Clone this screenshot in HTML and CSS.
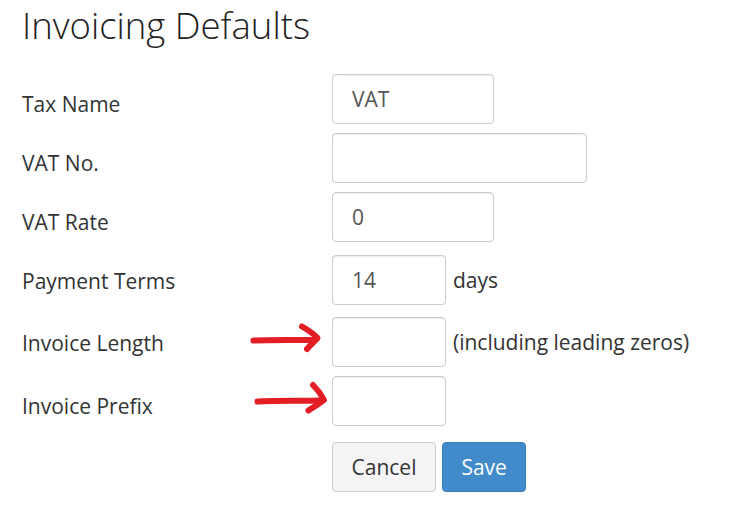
FILE: index.html
```html
<!DOCTYPE html>
<html>
<head>
<meta charset="utf-8">
<link rel="stylesheet" href="styles.css">
</head>
<body>
<div class="page">
  <h1 class="title">Invoicing Defaults</h1>
  <form class="form">
    <div class="row">
      <label class="label">Tax Name</label>
      <div class="control"><input class="input w-md" type="text" value="VAT"></div>
    </div>
    <div class="row">
      <label class="label">VAT No.</label>
      <div class="control"><input class="input w-lg" type="text" value=""></div>
    </div>
    <div class="row">
      <label class="label">VAT Rate</label>
      <div class="control"><input class="input w-md" type="text" value="0"></div>
    </div>
    <div class="row row-addon">
      <label class="label">Payment Terms</label>
      <div class="control"><input class="input w-sm" type="text" value="14"><span class="addon">days</span></div>
    </div>
    <div class="row row-addon">
      <label class="label">Invoice Length</label>
      <div class="control"><input class="input w-sm" type="text" value=""><span class="addon">(including leading zeros)</span></div>
      <svg class="arrow arrow-1" width="80" height="34" viewBox="0 0 80 34">
        <path d="M5.5 18.5 C 25 17.5, 45 18, 65 18" />
        <path d="M54 4.5 C 60 8, 66 12, 69.5 16 C 66 20, 62 23.5, 59 27" />
      </svg>
    </div>
    <div class="row">
      <label class="label">Invoice Prefix</label>
      <div class="control"><input class="input w-sm" type="text" value=""></div>
      <svg class="arrow arrow-2" width="80" height="36" viewBox="0 0 80 36">
        <path d="M7.5 21.5 C 28 20.5, 50 21, 70 20.5" />
        <path d="M63 5 C 67 9, 71 14, 74 20 C 69 24, 63 27.5, 58.5 30.5" />
      </svg>
    </div>
    <div class="actions">
      <button type="button" class="btn btn-default">Cancel</button>
      <button type="button" class="btn btn-primary">Save</button>
    </div>
  </form>
</div>
</body>
</html>
```

FILE: styles.css
```css
html, body {
  margin: 0;
  padding: 0;
  background: #ffffff;
}

.page {
  padding-left: 22px;
  font-family: "Open Sans", "Noto Sans", "Liberation Sans", sans-serif;
  color: #333333;
}

.title {
  margin: 0;
  font-size: 36.5px;
  font-weight: 300;
  line-height: 50px;
  color: #222222;
}

.form {
  margin-top: 24px;
  display: flex;
  flex-direction: column;
}

.row {
  position: relative;
  display: flex;
  align-items: flex-start;
  margin-bottom: 9px;
}

.label {
  width: 310px;
  flex: none;
  font-size: 21px;
  line-height: 30px;
  padding-top: 14.5px;
  color: #333333;
}

.control {
  display: flex;
  align-items: center;
}

.row-addon .control {
  padding-top: 3.5px;
}

.input {
  box-sizing: border-box;
  height: 50px;
  padding: 0 19px;
  border: 1px solid #cccccc;
  border-radius: 4px;
  box-shadow: inset 0 1px 1px rgba(0, 0, 0, 0.075);
  font-family: "Open Sans", "Noto Sans", "Liberation Sans", sans-serif;
  font-size: 21px;
  line-height: 30px;
  color: #555555;
  background: #ffffff;
  outline: none;
}

.w-sm { width: 114px; }
.w-md { width: 162px; }
.w-lg { width: 255px; }

.addon {
  margin-left: 7px;
  font-size: 21px;
  line-height: 30px;
  color: #333333;
}

.arrow {
  position: absolute;
  fill: none;
  stroke: #e31e24;
  stroke-width: 6;
  stroke-linecap: round;
  stroke-linejoin: round;
}

.arrow-1 { left: 226px; top: 8.5px; }
.arrow-2 { left: 228px; top: 4px; }

.actions {
  margin-top: 7px;
  padding-left: 310px;
  display: flex;
  gap: 6px;
}

.btn {
  box-sizing: border-box;
  height: 50px;
  padding: 0 18.5px;
  border-radius: 4px;
  font-family: "Open Sans", "Noto Sans", "Liberation Sans", sans-serif;
  font-size: 21px;
  line-height: 30px;
  cursor: pointer;
}

.btn-default {
  background: #f4f4f4;
  border: 1px solid #cccccc;
  color: #333333;
}

.btn-primary {
  background: #428bca;
  border: 1px solid #357ebd;
  color: #ffffff;
}
```
